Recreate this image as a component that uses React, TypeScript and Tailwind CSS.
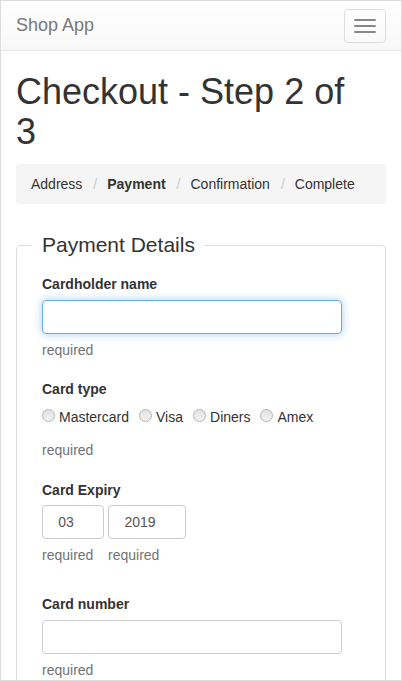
import React from "react";

const font = { fontFamily: '"Liberation Sans", Arial, sans-serif' };

function Radio({ label }: { label: string }) {
  return (
    <label className="flex items-center gap-[4px] h-[20px]">
      <span className="block w-[13px] h-[13px] -mt-[4px] rounded-full border border-[#b3b3b3] bg-gradient-to-b from-[#e2e2e2] to-[#f2f2f2]" />
      <span>{label}</span>
    </label>
  );
}

function Help({ className = "" }: { className?: string }) {
  return <div className={`h-[20px] leading-[20px] text-[#737373] ${className}`}>required</div>;
}

export default function App() {
  const crumbs = ["Address", "Payment", "Confirmation", "Complete"];

  return (
    <div
      className="w-[402px] h-[681px] overflow-hidden bg-white border border-[#dcdcdc] text-[14px] text-[#333]"
      style={font}
    >
      {/* navbar */}
      <div className="h-[50px] flex items-start justify-between pl-[15px] pr-[15px] bg-gradient-to-b from-white to-[#f8f8f8] border-b border-[#e7e7e7]">
        <div className="mt-[14px] text-[18px] leading-[20px] text-[#777]">Shop App</div>
        <button className="mt-[8px] w-[42px] h-[34px] rounded-[4px] border border-[#ddd] flex flex-col items-center justify-center gap-[4px]">
          <span className="block w-[22px] h-[2px] rounded-[1px] bg-[#888]" />
          <span className="block w-[22px] h-[2px] rounded-[1px] bg-[#888]" />
          <span className="block w-[22px] h-[2px] rounded-[1px] bg-[#888]" />
        </button>
      </div>

      <div className="px-[15px]">
        <h1 className="mt-[21px] max-w-[352px] text-[36px] leading-[39.6px] font-medium text-[#333]">
          Checkout - Step 2 of 3
        </h1>

        <ol className="mt-[13px] h-[40px] flex items-center px-[15px] rounded-[4px] bg-[#f5f5f5]">
          {crumbs.map((c, i) => (
            <li key={c} className="flex items-center">
              {i > 0 && <span className="ml-[11px] mr-[10px] text-[#ccc]">/</span>}
              <span className={c === "Payment" ? "font-bold" : ""}>{c}</span>
            </li>
          ))}
        </ol>

        <fieldset className="mt-[26px] border border-[#ddd] rounded-[4px] px-[25px] pb-[20px]">
          <legend className="-ml-[10px] px-[10px] text-[21px] leading-[30px] text-[#333]">
            Payment Details
          </legend>

          <div className="pt-[14px]">
            <label className="block font-bold leading-[20px]">Cardholder name</label>
            <input className="mt-[6px] block w-[300px] h-[34px] rounded-[4px] border border-[#66afe9] shadow-[0_0_8px_rgba(102,175,233,0.6)] outline-none" />
            <Help className="mt-[6px]" />

            <label className="mt-[19px] block font-bold leading-[20px]">Card type</label>
            <div className="mt-[8px] flex items-center gap-[10px] leading-[20px]">
              <Radio label="Mastercard" />
              <Radio label="Visa" />
              <Radio label="Diners" />
              <Radio label="Amex" />
            </div>
            <Help className="mt-[13px]" />

            <label className="mt-[20px] block font-bold leading-[20px]">Card Expiry</label>
            <div className="mt-[5px] flex gap-[4px]">
              <div className="w-[62px]">
                <input
                  defaultValue="03"
                  className="block w-[62px] h-[34px] rounded-[4px] border border-[#ccc] pl-[12px] pr-[26px] text-center text-[#555] outline-none"
                />
                <Help className="mt-[6px]" />
              </div>
              <div className="w-[78px]">
                <input
                  defaultValue="2019"
                  className="block w-[78px] h-[34px] rounded-[4px] border border-[#ccc] pl-[12px] pr-[26px] text-center text-[#555] outline-none"
                />
                <Help className="mt-[6px]" />
              </div>
            </div>

            <label className="mt-[29px] block font-bold leading-[20px]">Card number</label>
            <input className="mt-[6px] block w-[300px] h-[34px] rounded-[4px] border border-[#ccc] outline-none" />
            <Help className="mt-[6px]" />
          </div>
        </fieldset>
      </div>
    </div>
  );
}
